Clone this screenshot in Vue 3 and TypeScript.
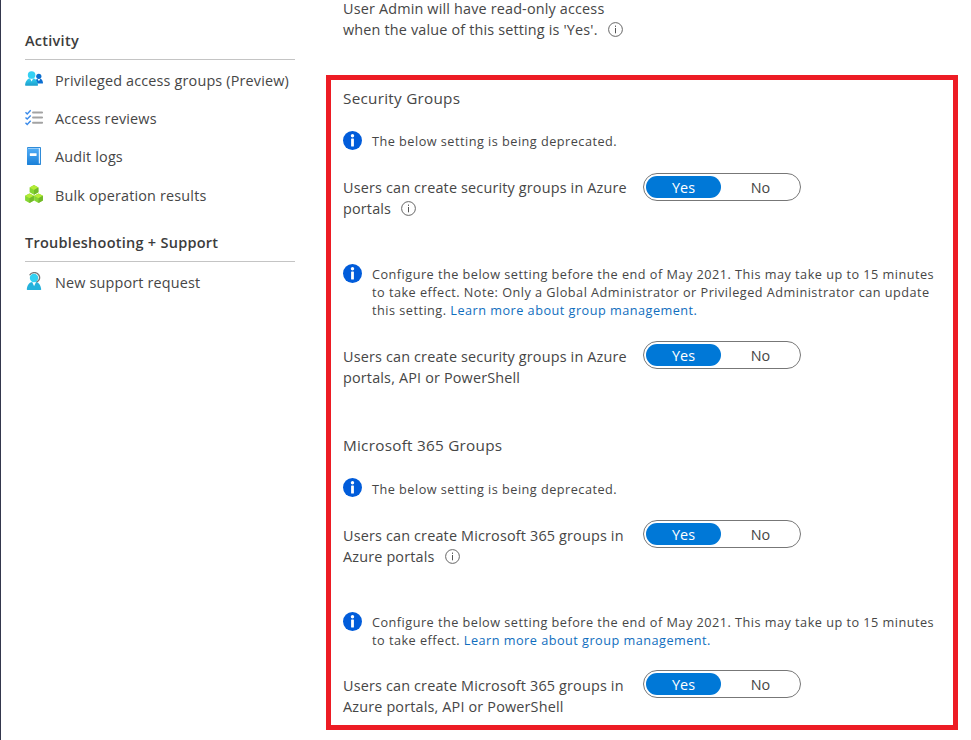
<script setup lang="ts">
import { ref } from 'vue'

type Icon = 'people' | 'checklist' | 'book' | 'cubes' | 'support'

interface MenuSection {
  title: string
  items: { label: string; icon: Icon }[]
}

interface Block {
  kind: 'heading' | 'notice' | 'setting'
  lines: string[]
  link?: string
  hint?: boolean
}

const sections: MenuSection[] = [
  {
    title: 'Activity',
    items: [
      { label: 'Privileged access groups (Preview)', icon: 'people' },
      { label: 'Access reviews', icon: 'checklist' },
      { label: 'Audit logs', icon: 'book' },
      { label: 'Bulk operation results', icon: 'cubes' },
    ],
  },
  {
    title: 'Troubleshooting + Support',
    items: [{ label: 'New support request', icon: 'support' }],
  },
]

const link = 'Learn more about group management.'

const blocks: Block[] = [
  { kind: 'heading', lines: ['Security Groups'] },
  { kind: 'notice', lines: ['The below setting is being deprecated.'] },
  { kind: 'setting', lines: ['Users can create security groups in Azure', 'portals'], hint: true },
  {
    kind: 'notice',
    lines: [
      'Configure the below setting before the end of May 2021. This may take up to 15 minutes',
      'to take effect. Note: Only a Global Administrator or Privileged Administrator can update',
      'this setting.',
    ],
    link,
  },
  { kind: 'setting', lines: ['Users can create security groups in Azure', 'portals, API or PowerShell'] },
  { kind: 'heading', lines: ['Microsoft 365 Groups'] },
  { kind: 'notice', lines: ['The below setting is being deprecated.'] },
  { kind: 'setting', lines: ['Users can create Microsoft 365 groups in', 'Azure portals'], hint: true },
  {
    kind: 'notice',
    lines: [
      'Configure the below setting before the end of May 2021. This may take up to 15 minutes',
      'to take effect.',
    ],
    link,
  },
  { kind: 'setting', lines: ['Users can create Microsoft 365 groups in', 'Azure portals, API or PowerShell'] },
]

const enabled = ref<boolean[]>(blocks.map(() => true))
</script>

<template>
  <div class="page">
    <nav class="sidebar">
      <section v-for="s in sections" :key="s.title" class="section">
        <h3>{{ s.title }}</h3>
        <ul>
          <li v-for="i in s.items" :key="i.label">
            <svg v-if="i.icon === 'people'" class="icon" viewBox="0 0 18 18">
              <defs>
                <linearGradient id="cy" x1="0" y1="0" x2="0" y2="1">
                  <stop offset="0" stop-color="#35d3f5" /><stop offset="1" stop-color="#1b9dcb" />
                </linearGradient>
              </defs>
              <path d="M11 13.6h6.2c.5 0 .8-.4.8-.9-.3-2.6-1.6-4.2-4.2-4.2-1.700 0-3 1-3.600 2.500z" fill="#0a6ed1" />
              <path d="M12.400 8.700l1.500 2.500 1.400-2.500z" fill="#fff" />
              <circle cx="13.800" cy="6.300" r="2.600" fill="#0b6fd0" />
              <path d="M1 15.800h11.200c.6 0 .9-.5.8-1C12.600 10.900 10.400 8 6.600 8S.6 10.900.1 14.800c-.1.500.3 1 .9 1z" fill="url(#cy)" />
              <path d="M4.900 8.300l1.700 3.200 1.700-3.200z" fill="#fff" />
              <circle cx="6.600" cy="5" r="3.800" fill="#35d0f3" />
            </svg>
            <svg v-else-if="i.icon === 'checklist'" class="icon" viewBox="0 0 18 18">
              <g fill="none" stroke="#3b8bea" stroke-width="1.400">
                <path d="M.5 4.200l1.700 1.700L5.700 2.200M.5 9.400l1.700 1.700 3.500-3.700M.5 14.800l1.700 1.700 3.500-3.700" />
              </g>
              <path d="M8 4.500h9.200M8 9.500h9.200M8 14.700h9.200" stroke="#a3a3a3" stroke-width="1.900" stroke-linecap="round" />
            </svg>
            <svg v-else-if="i.icon === 'book'" class="icon" viewBox="0 0 18 18">
              <defs>
                <linearGradient id="bk" x1="0" y1="0" x2="0" y2="1">
                  <stop offset="0" stop-color="#4fabf5" /><stop offset="1" stop-color="#1a80d8" />
                </linearGradient>
              </defs>
              <path d="M3 0h12.300q.7 0 .7.700v16.600q0 .7-.7.700H3q-1 0-1-1V1q0-1 1-1z" fill="#2f8bd8" />
              <path d="M3 1h12v15.500H3z" fill="#dceeff" />
              <path d="M2 1.600h11.800V18H3q-1 0-1-1z" fill="url(#bk)" />
              <rect x="4.800" y="6.200" width="6.800" height="2.700" rx=".4" fill="#fff" />
            </svg>
            <svg v-else-if="i.icon === 'cubes'" class="icon" viewBox="0 0 18 18">
              <g v-for="(p, n) in ['4.500 0', '0 8.300', '9 8.300']" :key="n" :transform="`translate(${p})`">
                <path d="M4.500.1L8.900 2.500v4.800L4.500 9.700.1 7.300V2.500z" fill="#86d633" />
                <path d="M4.500.1L8.900 2.500 4.500 4.900.1 2.500z" fill="#b4ec36" />
                <path d="M4.500 4.900l4.400-2.400v4.800L4.500 9.700z" fill="#72b92a" />
              </g>
            </svg>
            <svg v-else class="icon" viewBox="0 0 18 18">
              <path d="M4.600 3.200C6.500-.2 12-.4 13.900 3.100c1.200 2.400.7 5-1.500 6.500l-1.700.6" fill="none" stroke="#767676" stroke-width="1.300" />
              <path d="M2.600 18h12.800q1 0 .8-1C15.500 12.500 13.500 9.700 9 9.700S2.500 12.500 1.800 17q-.2 1 .8 1z" fill="#25b2dc" />
              <path d="M7.200 10l1.900 4.200 1.900-4.200z" fill="#fff" />
              <circle cx="9" cy="6" r="4.200" fill="#32d1f3" />
            </svg>
            <span>{{ i.label }}</span>
          </li>
        </ul>
      </section>
    </nav>

    <main class="content">
      <p class="intro">
        <span>User Admin will have read-only access</span><br />
        <span>when the value of this setting is 'Yes'.</span>
        <svg class="hint" viewBox="0 0 15 15">
          <circle cx="7.500" cy="7.500" r="6.900" fill="none" stroke="#666" />
          <path d="M7.500 6v5.300M7.500 3.600v1.300" stroke="#555" />
        </svg>
      </p>

      <div class="panel">
        <div v-for="(b, n) in blocks" :key="n" :class="b.kind">
          <svg v-if="b.kind === 'notice'" class="badge" viewBox="0 0 19 19">
            <circle cx="9.500" cy="9.500" r="9.500" fill="#015cda" />
            <circle cx="9.500" cy="4.800" r="1.700" fill="#fff" />
            <rect x="8.100" y="7.500" width="2.800" height="8" rx=".5" fill="#fff" />
          </svg>
          <p class="text">
            <template v-for="(l, k) in b.lines" :key="k"><br v-if="k > 0" />{{ l }}</template>
            <a v-if="b.link">{{ ' ' + b.link }}</a>
            <svg v-if="b.hint" class="hint" viewBox="0 0 15 15">
              <circle cx="7.500" cy="7.500" r="6.900" fill="none" stroke="#666" />
              <path d="M7.500 6v5.300M7.500 3.600v1.300" stroke="#555" />
            </svg>
          </p>
          <div v-if="b.kind === 'setting'" class="toggle">
            <button :class="{ on: enabled[n] }" @click="enabled[n] = true">Yes</button>
            <button :class="{ on: !enabled[n] }" @click="enabled[n] = false">No</button>
          </div>
        </div>
      </div>
    </main>
  </div>
</template>

<style>
body {
  background: #fff;
  overflow: hidden;
}
</style>

<style scoped>
.page {
  box-sizing: border-box;
  display: flex;
  width: 971px;
  height: 740px;
  overflow: hidden;
  border-left: 1px solid #34374d;
  font: 14.4px/21px 'Open Sans', 'Noto Sans', sans-serif;
  letter-spacing: 0.17px;
  color: #464646;
  white-space: nowrap;
}
p,
h3,
ul {
  margin: 0;
  padding: 0;
}
.sidebar {
  width: 270px;
  padding: 22px 31px 0 24px;
}
.section h3 {
  height: 37px;
  border-bottom: 1px solid #c4c4c4;
  font-size: 14.5px;
  line-height: 37px;
  font-weight: 600;
  letter-spacing: 0.26px;
  color: #3c3c3c;
}
.section ul {
  list-style: none;
  padding: 1px 0 10px;
}
.section li {
  display: flex;
  align-items: center;
  gap: 12px;
  height: 38.3px;
}
.icon {
  width: 18px;
  height: 18px;
  margin-bottom: 2px;
  flex: none;
}
.intro {
  height: 77px;
  padding-left: 17px;
  margin-top: -2px;
}
.hint {
  width: 15px;
  height: 15px;
  margin-left: 10px;
  vertical-align: -2px;
}
.panel {
  box-sizing: border-box;
  width: 632px;
  height: 655px;
  border: 5px solid #ed1c24;
  padding: 8px 0 0 12px;
  display: grid;
  grid-template-rows: 43px 42px 91px 77px 94px 43px 42px 92px 58px 47px;
}
.heading {
  font-size: 15.3px;
  letter-spacing: 0.25px;
}
.heading .text {
  line-height: 20px;
}
.notice {
  display: flex;
  gap: 10px;
}
.notice .text {
  padding-top: 1px;
  font-size: 12.7px;
  line-height: 18px;
  letter-spacing: 0.48px;
}
.notice:nth-child(7) .text {
  padding-top: 2px;
}
.badge {
  width: 19px;
  height: 19px;
  flex: none;
}
a {
  color: #106ebe;
}
.setting {
  display: grid;
  grid-template-columns: 300px 158px;
}
.setting .text {
  padding-top: 5px;
}
.setting:nth-child(3) .text {
  padding-top: 4px;
}
.toggle {
  box-sizing: border-box;
  display: flex;
  height: 28px;
  padding: 2px;
  border: 1px solid #777;
  border-radius: 14px;
}
.toggle button {
  flex: none;
  width: 75px;
  height: 22px;
  padding: 0;
  border: 0;
  border-radius: 11px;
  background: none;
  font: inherit;
  color: inherit;
}
.toggle button + button {
  width: 77px;
  padding-left: 2px;
}
.toggle .on {
  background: #0078d7;
  color: #fff;
}
</style>
